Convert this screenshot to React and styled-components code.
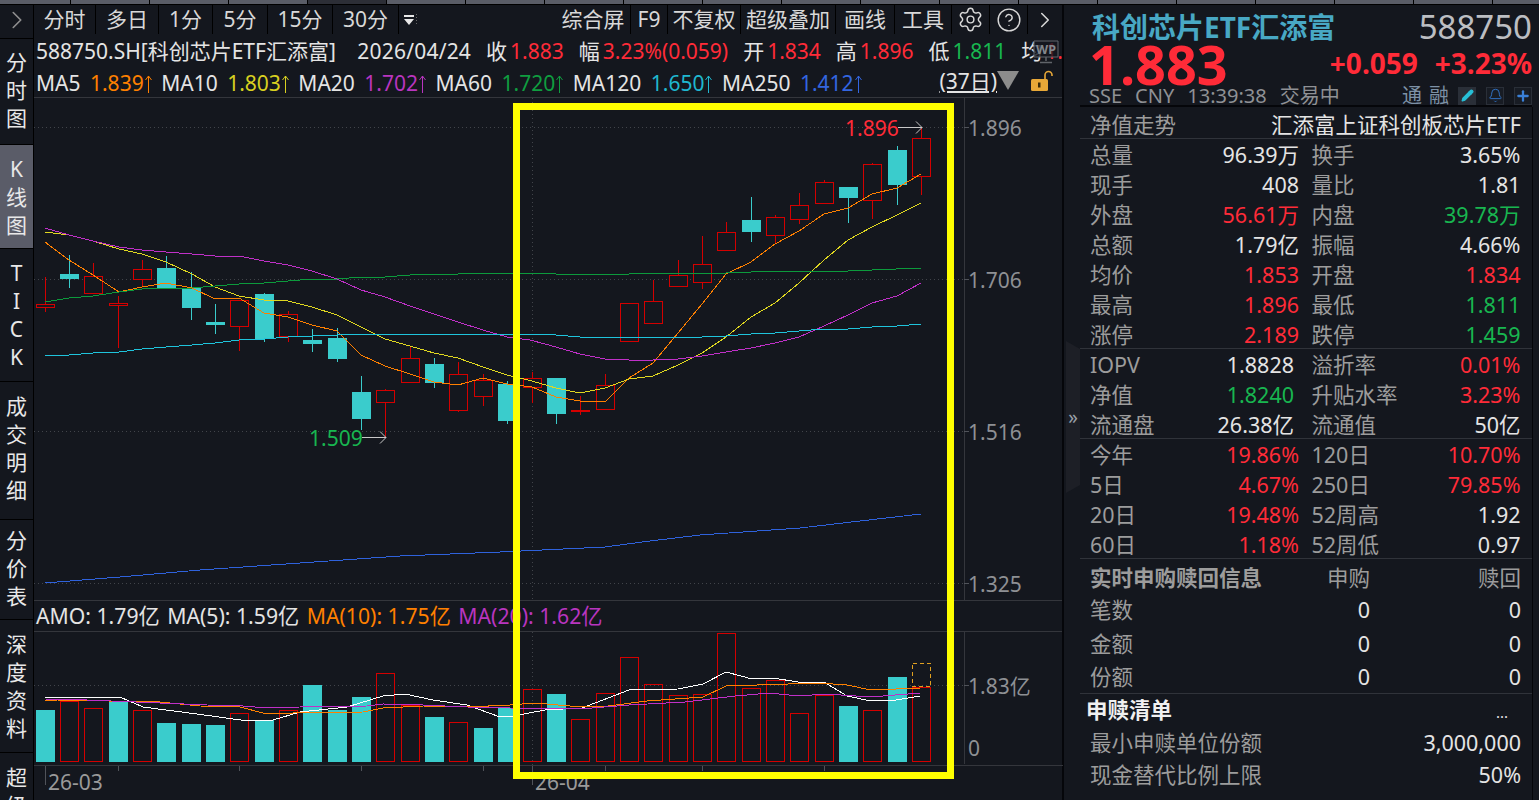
import React from 'react'
import styled, { createGlobalStyle } from 'styled-components'
import { Settings, CircleHelp, ChevronRight, Bell, Pencil, Plus } from 'lucide-react'

const RED = '#ff2b38'
const GREEN = '#18b650'
const CYAN = '#3acccc'
const DARK_RED = '#d40000'
const BG = '#14171e'

const GlobalStyle = createGlobalStyle`
  html, body {
    margin: 0;
    background: ${BG};
    overflow: hidden;
  }
  body {
    font-family: "Noto Sans", "Noto Sans CJK SC", sans-serif;
    color: #e4e4e4;
  }
`

const Page = styled.div`
  position: relative;
  width: 1539px;
  height: 800px;
  display: flex;
  flex-direction: column;
  overflow: hidden;
  background: ${BG};
`
const TabStrip = styled.div`
  height: 4px;
  display: flex;
  margin-left: -8px;
  border-bottom: 1px solid #000;
`
const Tab = styled.div`
  width: 78px;
  flex: none;
  background: ${p => (p.$active ? '#2c2e36' : '#5a5d67')};
  border-right: 1px solid #000;
`
const Main = styled.div`
  flex: 1;
  display: flex;
  min-height: 0;
`
const LeftPane = styled.div`
  width: 1064px;
  flex: none;
  display: flex;
  flex-direction: column;
  border-right: 2px solid #05060a;
  box-sizing: border-box;
`
const Toolbar = styled.div`
  height: 29px;
  flex: none;
  display: flex;
  align-items: stretch;
  font-size: 21px;
  line-height: 29px;
  color: #d8d8d8;
`
const ToolButton = styled.div`
  width: ${p => p.$w}px;
  flex: none;
  box-sizing: border-box;
  display: flex;
  align-items: center;
  justify-content: center;
  white-space: nowrap;
  border-right: ${p => (p.$plain ? 'none' : '1px solid #000')};
  color: ${p => (p.$dim ? '#8f8f8f' : 'inherit')};
`
const ToolSpacer = styled.div`
  flex: 1;
`
const LeftBody = styled.div`
  flex: 1;
  display: flex;
  min-height: 0;
`
const Rail = styled.div`
  width: 33px;
  flex: none;
  padding-top: 4px;
  border-right: 1px solid #000;
  overflow: hidden;
`
const RailButton = styled.div`
  height: ${p => p.$h}px;
  box-sizing: border-box;
  padding-bottom: ${p => p.$lift || 0}px;
  display: flex;
  flex-direction: column;
  align-items: center;
  justify-content: center;
  font-size: 21px;
  line-height: 28px;
  color: #e8e8e8;
  background: ${p => (p.$active ? '#5a5c68' : 'transparent')};
  border-top: 1px solid #000;
`
const ChartColumn = styled.div`
  flex: 1;
  min-width: 0;
  position: relative;
  display: flex;
  flex-direction: column;
`
const InfoRow = styled.div`
  height: 32px;
  flex: none;
  padding-left: 2px;
  box-sizing: border-box;
  display: flex;
  align-items: baseline;
  gap: 15px;
  font-size: 21px;
  line-height: 34px;
  white-space: nowrap;
  overflow: hidden;
`
const Symbol = styled.span`
  margin-right: 6.5px;
`
const TradeDate = styled.span`
  letter-spacing: 0.2px;
`
const Field = styled.span`
  display: inline-flex;
  align-items: baseline;
  gap: 3px;
`
const Value = styled.span`
  color: ${p => p.$c || 'inherit'};
`
const MaRow = styled.div`
  height: 31px;
  flex: none;
  padding-left: 2px;
  display: flex;
  align-items: baseline;
  gap: 9.5px;
  font-size: 21px;
  line-height: 34px;
  white-space: nowrap;
  border-bottom: 1px solid #34363c;
`
const MaValue = styled.span`
  color: ${p => p.$c};
`
const UpArrow = styled.svg`
  margin-left: 1px;
  vertical-align: -2px;
`
const MaTools = styled.div`
  margin-left: auto;
  align-self: center;
  padding: 0 8px 0 2px;
  margin-top: -2px;
  display: flex;
  align-items: center;
  gap: 2px;
`
const Period = styled.span`
  margin-right: -2px;
  text-decoration: underline;
  text-underline-offset: 2px;
`
const LockIcon = styled.svg`
  margin-left: 9px;
`
const WpBadge = styled.svg`
  position: absolute;
  left: 999px;
  top: 6px;
`
const ChartSvg = styled.svg`
  display: block;
  flex: none;
`
const AxisLabel = styled.text`
  font-size: 21px;
  fill: #8e9094;
`
const MarkLabel = styled.text`
  font-size: 21px;
  fill: ${p => p.$c};
`
const AmoRow = styled.div`
  height: 30px;
  flex: none;
  padding-left: 2px;
  display: flex;
  align-items: baseline;
  gap: 7.5px;
  font-size: 21.2px;
  line-height: 30px;
  white-space: nowrap;
  border-top: 1px solid #34363c;
  border-bottom: 1px solid #34363c;
`
const AmoItem = styled.span`
  color: ${p => p.$c || 'inherit'};
`
const DateAxis = styled.svg`
  display: block;
  flex: none;
  border-top: 1px solid #34363c;
`
const DateLabel = styled.text`
  font-size: 21px;
  fill: #9a9a9a;
`
const YellowFrame = styled.div`
  position: absolute;
  left: 513px;
  top: 103px;
  width: 441px;
  height: 676px;
  box-sizing: border-box;
  border: 7px solid #ffff00;
  pointer-events: none;
`

const QuotePanel = styled.div`
  flex: 1;
  min-width: 0;
  position: relative;
  padding: 0 7px 0 16px;
  display: flex;
  flex-direction: column;
`
const Head = styled.div`
  height: 102px;
  flex: none;
  box-sizing: border-box;
  padding: 4px 0 0 12px;
  border-bottom: 2px solid #05060a;
  display: flex;
  flex-direction: column;
`
const NameLine = styled.div`
  height: 36px;
  flex: none;
  display: flex;
  align-items: center;
  justify-content: space-between;
`
const PriceLine = styled.div`
  height: 39px;
  flex: none;
  display: flex;
  align-items: center;
  justify-content: space-between;
`
const StockName = styled.div`
  font-size: 28px;
  line-height: 36px;
  font-weight: 700;
  color: #48a8c4;
  white-space: nowrap;
`
const StockCode = styled.div`
  font-size: 33px;
  line-height: 38px;
  color: #bcbec2;
`
const Price = styled.div`
  font-size: 54px;
  line-height: 39px;
  font-weight: 700;
  color: ${RED};
  margin-left: -3px;
`
const Change = styled.div`
  display: flex;
  gap: 17px;
  font-size: 28px;
  line-height: 30px;
  font-weight: 700;
  color: ${RED};
  margin-bottom: 4px;
`
const StatusRow = styled.div`
  height: 23px;
  flex: none;
  display: flex;
  align-items: center;
  gap: 13px;
  font-size: 20px;
  line-height: 24px;
  color: #8f9195;
  margin-left: -3px;
`
const Margin = styled.div`
  margin-left: auto;
  display: flex;
  align-items: center;
  gap: 7px;
  color: #7d91a6;
`
const IconBox = styled.span`
  width: 18px;
  height: 18px;
  display: inline-flex;
  align-items: center;
  justify-content: center;
  margin-left: ${p => (p.$filled ? 2 : 3)}px;
  background: ${p => (p.$filled ? '#2a2f38' : '#181c24')};
  border: 1px solid #2a2f38;
  box-sizing: border-box;
`
const Rows = styled.div`
  flex: 1;
  border-right: 1px solid #05060a;
  margin-right: -1px;
  font-size: 21.5px;
  color: #9c9c9c;
  overflow: hidden;
`
const TitleRow = styled.div`
  height: 32px;
  box-sizing: border-box;
  padding: 0 11px 0 10px;
  display: flex;
  align-items: baseline;
  justify-content: space-between;
  line-height: 35px;
  box-shadow: inset 0 -1px 0 #30333a;
`
const TitleValue = styled.span`
  color: #e4e4e4;
`
const Section = styled.div`
  box-shadow: ${p => (p.$last ? 'none' : 'inset 0 -1px 0 #30333a')};
`
const DataRow = styled.div`
  height: 30px;
  box-sizing: border-box;
  padding: 0 11px 0 10px;
  display: grid;
  grid-template-columns: 209px 209px;
  column-gap: 12.5px;
`
const Cell = styled.div`
  display: flex;
  align-items: baseline;
  justify-content: space-between;
  line-height: 32px;
  white-space: nowrap;
  padding-right: ${p => (p.$inset ? 5 : 0)}px;
`
const CellValue = styled.span`
  color: ${p => p.$c || '#e4e4e4'};
`
const PurchaseRow = styled.div`
  height: 33.75px;
  box-sizing: border-box;
  padding: 0 11px 0 10px;
  display: grid;
  grid-template-columns: 1fr 100px 151px;
  align-items: baseline;
  line-height: ${p => (p.$head ? 37 : 33.75)}px;
  white-space: nowrap;
`
const ColumnHead = styled.span`
  text-align: right;
`
const NumberCell = styled.span`
  text-align: right;
  color: #e4e4e4;
`
const StrongLabel = styled.span`
  font-weight: 700;
  color: ${p => (p.$bright ? '#f0f0f0' : '#9c9c9c')};
  margin-left: ${p => (p.$bright ? -4 : 0)}px;
`
const ListRow = styled.div`
  height: 32.5px;
  box-sizing: border-box;
  padding: 0 11px 0 10px;
  display: flex;
  align-items: baseline;
  justify-content: space-between;
  line-height: 32.5px;
  white-space: nowrap;
`
const Dots = styled.span`
  color: #e4e4e4;
  font-size: 15px;
  margin-right: 13px;
`
const Handle = styled.div`
  position: absolute;
  left: 2px;
  top: 336px;
  width: 14px;
  height: 152px;
  background: #1d1f26;
  clip-path: polygon(0 0, 100% 8px, 100% calc(100% - 8px), 0 100%);
  display: flex;
  align-items: center;
  justify-content: center;
  font-size: 19px;
  color: #9aa0a8;
`

// [x, bodyTop, bodyBottom, high, low, up]
const candles = [
  [45, 304, 307, 277, 312, 1], [69, 274, 279, 255, 288, 0], [93, 276, 293, 263, 293, 1],
  [118, 303, 305, 296, 348, 1], [142, 269, 279, 260, 286, 1], [166, 268, 288, 256, 289, 0],
  [191, 288, 308, 272, 320, 0], [215, 322, 325, 304, 334, 0], [239, 300, 326, 300, 351, 1],
  [264, 294, 339, 293, 342, 0], [288, 314, 336, 311, 342, 1], [312, 340, 344, 329, 352, 0],
  [337, 338, 359, 328, 362, 0], [361, 392, 419, 376, 430, 0], [385, 390, 402, 389, 437, 1],
  [410, 358, 382, 347, 382, 1], [434, 364, 383, 358, 388, 0], [458, 374, 410, 362, 412, 1],
  [483, 380, 396, 374, 406, 1], [507, 384, 421, 381, 424, 0], [532, 378, 387, 372, 403, 1],
  [556, 378, 414, 378, 424, 0], [580, 410, 411, 396, 415, 1], [605, 385, 409, 374, 409, 1],
  [629, 303, 341, 303, 341, 1], [653, 301, 323, 280, 323, 1], [678, 275, 286, 260, 286, 1],
  [702, 264, 282, 236, 289, 1], [726, 232, 250, 222, 250, 1], [751, 220, 232, 197, 242, 0],
  [775, 217, 235, 215, 243, 1], [799, 205, 219, 193, 224, 1], [824, 182, 203, 180, 203, 1],
  [848, 187, 198, 187, 223, 0], [872, 164, 200, 163, 219, 1], [897, 150, 185, 146, 205, 0],
  [921, 138, 176, 128, 195, 1],
]

const priceLines = [
  ['#ff8000', '45,242 69,260 93,275 119,292 142,287 166,283 192,288 215,299 239,298 264,313 288,317 312,325 337,331 361,355 385,366 410,374 434,382 458,385 483,378 507,384 532,387 556,397 580,401 605,402 629,378 653,363 678,333 702,304 726,274 751,262 775,244 799,231 824,214 848,208 872,194 897,188 921,174'],
  ['#e0d820', '45,232 69,235 93,241 119,249 142,254 166,262 192,274 215,287 239,296 264,300 288,301 312,307 337,315 361,327 385,339 410,346 434,353 458,358 483,367 507,375 532,381 556,388 580,393 605,388 629,379 653,376 678,365 702,353 726,337 751,317 775,303 799,283 824,260 848,240 872,227 897,215 921,203'],
  ['#c030c8', '45,228 69,235 93,241 119,247 142,250 166,252 192,254 215,256 239,256 264,261 288,265 312,271 337,279 361,290 385,297 410,306 434,314 458,322 483,330 507,337 530,340 556,347 580,354 605,359 629,360 653,360 678,359 702,356 726,352 751,348 775,343 799,337 824,326 848,315 872,303 897,296 921,283'],
  ['#0c9a3c', '45,302 69,298 93,296 119,292 142,289 166,288 192,288 215,286 239,284 264,283 288,281 312,279 337,279 361,277 385,277 410,275 434,274 458,274 483,273 507,274 530,273 556,274 629,274 653,273 726,273 751,272 775,271 848,271 872,270 921,268'],
  ['#1fc4dc', '45,356 69,355 93,353 119,352 142,349 166,347 192,345 215,343 239,340 264,339 288,337 312,336 337,335 361,334 410,334 434,334 507,334 530,334 556,335 580,337 605,337 629,338 653,337 678,337 702,337 726,336 751,334 775,333 799,331 824,329 848,329 872,327 897,326 921,324'],
  ['#2f62dc', '45,583 120,577 200,570 300,563 400,556 500,552 605,547 650,541 700,535 800,528 860,521 921,514'],
]

// [x, top, up], bars share the baseline
const volumes = [
  [45, 710, 0], [69, 701, 1], [93, 708, 1], [118, 701, 0], [142, 710, 1], [166, 723, 0],
  [191, 724, 0], [215, 725, 0], [239, 713, 1], [264, 720, 0], [288, 710, 1], [312, 685, 0],
  [337, 710, 0], [361, 697, 0], [385, 673, 1], [410, 705, 1], [434, 717, 0], [458, 722, 1],
  [483, 728, 0], [507, 708, 0], [532, 689, 1], [556, 694, 0], [580, 719, 1], [605, 693, 1],
  [629, 657, 1], [653, 684, 1], [678, 695, 1], [702, 694, 1], [726, 633, 1], [751, 688, 1],
  [775, 680, 1], [799, 713, 1], [824, 695, 1], [848, 706, 0], [872, 710, 1], [897, 677, 0],
  [921, 687, 1],
]

const volumeLines = [
  ['#ffffff', '45,697 120,697 143,707 197,714 248,721 273,720 300,712 347,707 383,696 405,694 433,700 467,705 500,717 513,716 545,710 582,708 629,690 678,689 703,684 726,672 752,679 773,678 798,682 824,682 847,696 871,701 896,700 920,696'],
  ['#ff8000', '45,701 57,700 160,702 200,706 240,707 263,713 293,713 363,712 383,708 423,706 467,707 510,705 535,703 570,706 608,706 647,701 703,697 726,686 819,683 847,685 871,690 896,689 920,688'],
  ['#c030c8', '45,699 87,700 160,703 207,705 243,706 267,708 300,707 367,706 383,704 423,705 467,707 510,708 580,709 629,705 685,702 735,696 770,693 798,696 826,694 871,697 920,693'],
]

const Candle = ({ c }) => {
  const [x, top, bottom, high, low, up] = c
  const color = up ? DARK_RED : CYAN
  const left = x - 9
  return (
    <g shapeRendering="crispEdges">
      <line x1={x + 0.5} x2={x + 0.5} y1={high} y2={top} stroke={color} />
      <line x1={x + 0.5} x2={x + 0.5} y1={bottom} y2={low} stroke={color} />
      {up
        ? <rect x={left + 0.5} y={top + 0.5} width={18} height={Math.max(bottom - top, 1)} fill={BG} stroke={color} />
        : <rect x={left} y={top} width={19} height={Math.max(bottom - top, 1)} fill={color} />}
    </g>
  )
}

const Arrow = ({ x, y }) => (
  <path d={`M${x} ${y + 0.5}H${x + 24}M${x + 18} ${y - 5.5}L${x + 24} ${y + 0.5}L${x + 18} ${y + 6.5}`} fill="none" stroke="#c8c8c8" />
)

const GridLine = ({ y }) => (
  <line x1={34} x2={964} y1={y + 0.5} y2={y + 0.5} stroke="#41444a" strokeDasharray="1 3" shapeRendering="crispEdges" />
)

const PriceChart = () => (
  <ChartSvg width={1029} height={502} viewBox="34 98 1029 502">
    {[127, 279, 431, 583].map(y => <GridLine key={y} y={y} />)}
    <line x1={532.5} x2={532.5} y1={98} y2={600} stroke="#41444a" strokeDasharray="1 3" shapeRendering="crispEdges" />
    <line x1={964.5} x2={964.5} y1={98} y2={600} stroke="#34363c" shapeRendering="crispEdges" />
    {[127, 279, 431, 583].map(y => (
      <line key={y} x1={964} x2={969} y1={y + 0.5} y2={y + 0.5} stroke="#50535a" shapeRendering="crispEdges" />
    ))}
    {candles.map(c => <Candle key={c[0]} c={c} />)}
    {priceLines.map(([color, pts]) => (
      <polyline key={color} points={pts} fill="none" stroke={color} strokeWidth="1" shapeRendering="crispEdges" />
    ))}
    <MarkLabel $c={RED} x={845} y={136}>1.896</MarkLabel>
    <Arrow x={898} y={127} />
    <MarkLabel $c={GREEN} x={309} y={446}>1.509</MarkLabel>
    <Arrow x={362} y={437} />
    <AxisLabel x={968} y={136}>1.896</AxisLabel>
    <AxisLabel x={968} y={288}>1.706</AxisLabel>
    <AxisLabel x={968} y={440}>1.516</AxisLabel>
    <AxisLabel x={968} y={592}>1.325</AxisLabel>
  </ChartSvg>
)

const VolumeChart = () => (
  <ChartSvg width={1029} height={133} viewBox="34 632 1029 133">
    <line x1={34} x2={964} y1={685.5} y2={685.5} stroke="#41444a" strokeDasharray="1 3" shapeRendering="crispEdges" />
    <line x1={532.5} x2={532.5} y1={632} y2={765} stroke="#41444a" strokeDasharray="1 3" shapeRendering="crispEdges" />
    <line x1={964.5} x2={964.5} y1={632} y2={764} stroke="#34363c" shapeRendering="crispEdges" />
    <line x1={964} x2={969} y1={685.5} y2={685.5} stroke="#50535a" shapeRendering="crispEdges" />
    {volumes.map(([x, top, up]) => (
      <g key={x} shapeRendering="crispEdges">
        {up
          ? <rect x={x - 8.5} y={top + 0.5} width={18} height={761 - top} fill="none" stroke={DARK_RED} />
          : <rect x={x - 9} y={top} width={19} height={762 - top} fill={CYAN} />}
      </g>
    ))}
    <rect x={912.5} y={663.5} width={18} height={23} fill="none" stroke="#e0a020" strokeDasharray="4 3" shapeRendering="crispEdges" />
    {volumeLines.map(([color, pts]) => (
      <polyline key={color} points={pts} fill="none" stroke={color} strokeWidth="1" shapeRendering="crispEdges" />
    ))}
    <AxisLabel x={968} y={694}>1.83亿</AxisLabel>
    <AxisLabel x={968} y={756}>0</AxisLabel>
  </ChartSvg>
)

const ticks = [45, 118, 239, 361, 483, 532, 605, 702, 824]

const Dates = () => (
  <DateAxis width={1029} height={34} viewBox="34 766 1029 34">
    {ticks.map(x => (
      <line key={x} x1={x + 0.5} x2={x + 0.5} y1={766} y2={x === 45 || x === 532 ? 785 : 771} stroke="#50535a" shapeRendering="crispEdges" />
    ))}
    <DateLabel x={48} y={790}>26-03</DateLabel>
    <DateLabel x={535} y={790}>26-04</DateLabel>
  </DateAxis>
)

const tools = [
  ['分时', 62], ['多日', 63], ['1分', 54], ['5分', 55], ['15分', 65], ['30分', 66],
]
const rightTools = [
  ['综合屏', 75], ['F9', 37], ['不复权', 73], ['超级叠加', 95], ['画线', 59], ['工具', 57],
]
const railItems = [
  ['分时图', 106, false, 4], ['K线图', 104, true, 0], ['TICK', 133, false, 0], ['成交明细', 138, false, 5],
  ['分价表', 100, false, 4], ['深度资料', 133, false, 0], ['超级', 76, false, 0],
]
const maItems = [
  ['MA5', '1.839', '#ff8000'], ['MA10', '1.803', '#d8d020'], ['MA20', '1.702', '#b935c0'],
  ['MA60', '1.720', '#0f9d40'], ['MA120', '1.650', '#1fb8d0'], ['MA250', '1.412', '#3366e0'],
]

const quoteA = [
  ['总量', '96.39万', null, '换手', '3.65%', null], ['现手', '408', null, '量比', '1.81', null],
  ['外盘', '56.61万', RED, '内盘', '39.78万', GREEN], ['总额', '1.79亿', null, '振幅', '4.66%', null],
  ['均价', '1.853', RED, '开盘', '1.834', RED], ['最高', '1.896', RED, '最低', '1.811', GREEN],
  ['涨停', '2.189', RED, '跌停', '1.459', GREEN],
]
const quoteB = [
  ['IOPV', '1.8828', null, '溢折率', '0.01%', RED], ['净值', '1.8240', GREEN, '升贴水率', '3.23%', RED],
  ['流通盘', '26.38亿', null, '流通值', '50亿', null],
]
const quoteC = [
  ['今年', '19.86%', RED, '120日', '10.70%', RED], ['5日', '4.67%', RED, '250日', '79.85%', RED],
  ['20日', '19.48%', RED, '52周高', '1.92', null], ['60日', '1.18%', RED, '52周低', '0.97', null],
]

const QuoteRows = ({ rows, inset }) => rows.map(r => (
  <DataRow key={r[0]}>
    <Cell $inset={inset}><span>{r[0]}</span><CellValue $c={r[2]}>{r[1]}</CellValue></Cell>
    <Cell><span>{r[3]}</span><CellValue $c={r[5]}>{r[4]}</CellValue></Cell>
  </DataRow>
))

const App = () => (
  <Page>
    <GlobalStyle />
    <TabStrip>
      {Array.from({ length: 20 }).map((_, i) => <Tab key={i} $active={i === 4} />)}
    </TabStrip>
    <Main>
      <LeftPane>
        <Toolbar>
          <ToolButton $w={34} $dim><ChevronRight size={30} strokeWidth={1.3} /></ToolButton>
          {tools.map(([t, w]) => <ToolButton key={t} $w={w}>{t}</ToolButton>)}
          <ToolButton $w={21} $plain>
            <svg width="14" height="12" viewBox="0 0 14 12">
              <path d="M1 1h10v2H1zM1 5h10L6 11z" fill="#e8e8e8" />
              <path d="M13.5 0v12" stroke="#666" strokeDasharray="1 2" />
            </svg>
          </ToolButton>
          <ToolSpacer />
          {rightTools.map(([t, w]) => <ToolButton key={t} $w={w}>{t}</ToolButton>)}
          <ToolButton $w={38}><Settings size={27} strokeWidth={1.3} /></ToolButton>
          <ToolButton $w={38}><CircleHelp size={26} strokeWidth={1.3} /></ToolButton>
          <ToolButton $w={34} $plain><ChevronRight size={26} strokeWidth={1.4} /></ToolButton>
        </Toolbar>
        <LeftBody>
          <Rail>
            {railItems.map(([t, h, active, lift]) => (
              <RailButton key={t} $h={h} $active={active} $lift={lift}>
                {[...t].map((ch, i) => <span key={i}>{ch}</span>)}
              </RailButton>
            ))}
          </Rail>
          <ChartColumn>
            <InfoRow>
              <Symbol>588750.SH[科创芯片ETF汇添富]</Symbol>
              <TradeDate>2026/04/24</TradeDate>
              <Field><span>收</span><Value $c={RED}>1.883</Value></Field>
              <Field><span>幅</span><Value $c={RED}>3.23%(0.059)</Value></Field>
              <Field><span>开</span><Value $c={RED}>1.834</Value></Field>
              <Field><span>高</span><Value $c={RED}>1.896</Value></Field>
              <Field><span>低</span><Value $c={GREEN}>1.811</Value></Field>
              <Field><span>均</span><Value $c={RED}>1.853</Value></Field>
            </InfoRow>
            <WpBadge width="26" height="24" viewBox="0 0 26 24">
              <path d="M1 1h24v16H1z" fill="#14171ecc" stroke="#60646a" />
              <path d="M13 17v4M7 22.5h12" stroke="#60646a" strokeWidth="1.5" />
              <text x="13" y="13.5" fontSize="12.5" fontWeight="700" textAnchor="middle" fill="#83878d">WP</text>
            </WpBadge>
            <MaRow>
              {maItems.map(([name, val, c]) => (
                <React.Fragment key={name}>
                  <span>{name}</span>
                  <MaValue $c={c}>
                    {val}
                    <UpArrow width="7" height="18" viewBox="0 0 7 18">
                      <path d="M3.5 1v17M0.5 5l3-4 3 4" fill="none" stroke={c} />
                    </UpArrow>
                  </MaValue>
                </React.Fragment>
              ))}
              <MaTools>
                <Period>(37日)</Period>
                <svg width="22" height="19" viewBox="0 0 22 19"><path d="M0 0h22L11 19z" fill="#8c8c8c" /></svg>
                <LockIcon width="24" height="22" viewBox="0 0 24 22">
                  <path d="M15 9V5a3.5 3.5 0 0 1 7 0v1" fill="none" stroke="#e8a838" strokeWidth="1.6" />
                  <rect x="1" y="9" width="17" height="12" rx="1.5" fill="#e8a838" />
                  <rect x="8" y="12.5" width="2.5" height="5" fill="#3a2a08" />
                </LockIcon>
              </MaTools>
            </MaRow>
            <PriceChart />
            <AmoRow>
              <AmoItem>AMO: 1.79亿</AmoItem>
              <AmoItem>MA(5): 1.59亿</AmoItem>
              <AmoItem $c="#ff8000">MA(10): 1.75亿</AmoItem>
              <AmoItem $c="#b935c0">MA(20): 1.62亿</AmoItem>
            </AmoRow>
            <VolumeChart />
            <Dates />
          </ChartColumn>
        </LeftBody>
      </LeftPane>
      <QuotePanel>
        <Handle>»</Handle>
        <Head>
          <NameLine>
            <StockName>科创芯片ETF汇添富</StockName>
            <StockCode>588750</StockCode>
          </NameLine>
          <PriceLine>
            <Price>1.883</Price>
            <Change><span>+0.059</span><span>+3.23%</span></Change>
          </PriceLine>
          <StatusRow>
            <span>SSE</span><span>CNY</span><span>13:39:38</span><span>交易中</span>
            <Margin>
              <span>通</span><span>融</span>
              <IconBox $filled><Pencil size={13} color="#28c0d8" fill="#28c0d8" /></IconBox>
              <IconBox><Bell size={15} color="#2f6fc0" strokeWidth={1.6} /></IconBox>
              <IconBox><Plus size={16} color="#3a80d8" strokeWidth={3.4} /></IconBox>
            </Margin>
          </StatusRow>
        </Head>
        <Rows>
          <TitleRow>
            <span>净值走势</span>
            <TitleValue>汇添富上证科创板芯片ETF</TitleValue>
          </TitleRow>
          <Section><QuoteRows rows={quoteA} /></Section>
          <Section><QuoteRows rows={quoteB} inset /></Section>
          <Section><QuoteRows rows={quoteC} /></Section>
          <Section>
            <PurchaseRow $head>
              <StrongLabel>实时申购赎回信息</StrongLabel>
              <ColumnHead>申购</ColumnHead>
              <ColumnHead>赎回</ColumnHead>
            </PurchaseRow>
            {['笔数', '金额', '份额'].map(t => (
              <PurchaseRow key={t}>
                <span>{t}</span>
                <NumberCell>0</NumberCell>
                <NumberCell>0</NumberCell>
              </PurchaseRow>
            ))}
          </Section>
          <Section $last>
            <ListRow><StrongLabel $bright>申赎清单</StrongLabel><Dots>...</Dots></ListRow>
            <ListRow><span>最小申赎单位份额</span><CellValue>3,000,000</CellValue></ListRow>
            <ListRow><span>现金替代比例上限</span><CellValue>50%</CellValue></ListRow>
          </Section>
        </Rows>
      </QuotePanel>
    </Main>
    <YellowFrame />
  </Page>
)

export default App
